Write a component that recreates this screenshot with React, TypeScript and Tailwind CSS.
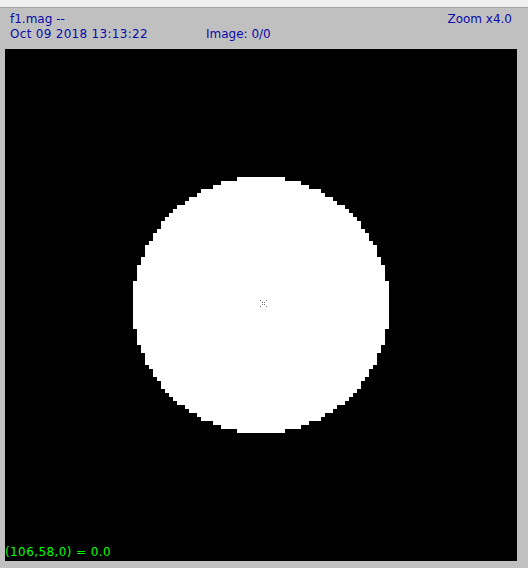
const IMG = 128;
const SCALE = 4;

// rows of the thresholded disc, in image pixels
const discRows = (() => {
  const rows: { y: number; x0: number; x1: number }[] = [];
  const c = 64;
  const r = 32;
  for (let j = 0; j < IMG; j++) {
    let x0 = -1;
    let x1 = -1;
    for (let i = 0; i < IMG; i++) {
      const dx = i + 0.5 - c;
      const dy = j + 0.5 - c;
      if (dx * dx + dy * dy <= r * r) {
        if (x0 < 0) x0 = i;
        x1 = i;
      }
    }
    if (x0 >= 0) rows.push({ y: j, x0, x1 });
  }
  return rows;
})();

const cursorDots = [-3, -1, 1, 3].flatMap((d) => [
  [d, d],
  [d, -d],
]);

const ImageView = () => (
  <div className="relative ml-[5px] h-[512px] w-[512px] bg-black">
    <svg
      width={512}
      height={512}
      viewBox="0 0 512 512"
      shapeRendering="crispEdges"
      className="block"
    >
      {discRows.map((row) => (
        <rect
          key={row.y}
          x={row.x0 * SCALE}
          y={row.y * SCALE}
          width={(row.x1 - row.x0 + 1) * SCALE}
          height={SCALE}
          fill="#ffffff"
        />
      ))}
      {cursorDots.map(([dx, dy], i) => (
        <rect key={i} x={258 + dx} y={254 + dy} width={1} height={1} fill="#6e6e6e" />
      ))}
    </svg>
    <span className="absolute bottom-[1px] left-0 text-[12px] leading-[15px] tracking-[0.4px] text-[#00ff00]">
      (106,58,0) = 0.0
    </span>
  </div>
);

export default function App() {
  return (
    <div className="flex h-[568px] w-[528px] flex-col bg-[#c0c0c0] font-['DejaVu_Sans',sans-serif]">
      <div className="h-[8px] border-b border-[#a3a3a3] bg-[#f0f0f0]" />
      {/* header */}
      <div className="h-[41px] pt-[4px] pl-[10px] pr-[16px] text-[12px] leading-[15px] text-[#0a0aa8]">
        <div className="flex justify-between">
          <span>f1.mag --</span>
          <span>Zoom x4.0</span>
        </div>
        <div className="flex">
          <span className="w-[196px] tracking-[0.3px]">Oct 09 2018 13:13:22</span>
          <span>Image: 0/0</span>
        </div>
      </div>
      <ImageView />
    </div>
  );
}
